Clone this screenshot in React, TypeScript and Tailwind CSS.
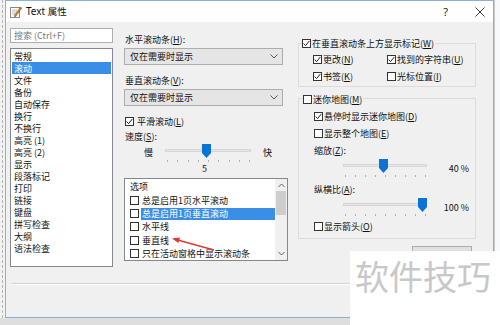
import React from "react";

const Cb = ({ checked = false }: { checked?: boolean }) => (
  <span className="w-[9px] h-[9px] border border-[#333333] bg-white flex items-center justify-center shrink-0">
    {checked && (
      <svg width="7" height="7" viewBox="0 0 7 7">
        <path d="M0.6 3.6 L2.6 5.6 L6.4 0.9" stroke="#222" strokeWidth="1" fill="none" />
      </svg>
    )}
  </span>
);

const U = ({ c }: { c: string }) => <span className="underline underline-offset-[1px]">{c}</span>;

const Slider = ({ width, thumb, ticks }: { width: number; thumb: number; ticks: number[] }) => (
  <div className="relative h-[17px]" style={{ width }}>
    <div className="absolute left-0 right-0 top-[5px] h-[3px] bg-[#e7e7e7] border border-[#d6d6d6]" />
    {ticks.map((t, i) => (
      <div key={i} className="absolute top-[16px] w-[1px] h-[2px] bg-[#b0b0b0]" style={{ left: t }} />
    ))}
    <svg className="absolute top-0" style={{ left: thumb - 4 }} width="9" height="14" viewBox="0 0 9 14">
      <path d="M0 0 H9 V9 L4.5 14 L0 9 Z" fill="#0a74d6" />
    </svg>
  </div>
);

const ticksFor = (w: number, n: number) => Array.from({ length: n }, (_, i) => Math.round(2 + (i * (w - 4)) / (n - 1)));

const Combo = ({ text }: { text: string }) => (
  <div className="h-[17px] w-[159px] bg-[#e5e5e5] border border-[#adadad] flex items-center pl-[5px] pr-[4px] justify-between">
    <span>{text}</span>
    <svg width="8" height="5" viewBox="0 0 8 5">
      <path d="M0.5 0.5 L4 4 L7.5 0.5" stroke="#555" strokeWidth="1" fill="none" />
    </svg>
  </div>
);

const navItems = [
  "常规", "滚动", "文件", "备份", "自动保存", "换行", "不换行", "高亮 (1)", "高亮 (2)", "显示",
  "段落标记", "打印", "链接", "键盘", "拼写检查", "大纲", "语法检查",
];

export default function App() {
  return (
    <div className="w-[500px] h-[325px] bg-[#dedede] overflow-hidden relative flex font-['Noto_Sans_CJK_SC',sans-serif] text-[9px] text-[#111] leading-none">
      {/* left background strip */}
      <div className="w-[5px] h-[318px] bg-[#f2f2f2] flex justify-center">
        <div className="w-0 h-full border-l border-dashed border-[#b5b5b5]" />
      </div>
      {/* dialog */}
      <div className="w-[489px] h-[318px] border border-[#8cb0d6] bg-[#f0f0f0] flex flex-col shrink-0">
        {/* title bar */}
        <div className="h-[21px] bg-white flex items-center pl-[4px] pr-[8px] shrink-0">
          <svg width="12" height="12" viewBox="0 0 12 12">
            <rect x="0.5" y="1.5" width="9" height="10" fill="#fff" stroke="#888" />
            <line x1="2" y1="4" x2="7" y2="4" stroke="#bbb" />
            <line x1="2" y1="6" x2="7" y2="6" stroke="#bbb" />
            <line x1="2" y1="8" x2="6" y2="8" stroke="#bbb" />
            <path d="M4 10 L10.5 1 L11.8 2 L5.3 11 Z" fill="#c98a2b" stroke="#7a4a10" strokeWidth="0.5" />
          </svg>
          <span className="ml-[4px] text-[10px] font-['Noto_Sans',sans-serif] text-[#111]">
            Text <span className="font-['Noto_Sans_CJK_SC',sans-serif] text-[9.5px]">属性</span>
          </span>
          <span className="ml-auto text-[11px] font-['Noto_Sans',sans-serif] text-[#222]">?</span>
          <svg className="ml-[27px]" width="10" height="10" viewBox="0 0 10 10">
            <path d="M0.5 0.5 L9.5 9.5 M9.5 0.5 L0.5 9.5" stroke="#222" strokeWidth="0.9" />
          </svg>
        </div>
        {/* body */}
        <div className="h-[261px] flex pl-[4px] shrink-0">
          {/* left column */}
          <div className="w-[103px] flex flex-col pt-[6px]">
            <div className="h-[15px] border border-[#aeaeae] bg-white flex items-center pl-[3px] text-[#7a7a7a]">
              搜索 <span className="ml-[2px]">(Ctrl+F)</span>
            </div>
            <div className="mt-[5px] h-[219px] border border-[#828790] bg-white pt-[1px] px-[1px]">
              {navItems.map((n, i) => (
                <div key={n} className={`h-[12px] flex items-center pl-[2px] ${i === 1 ? "bg-[#3b8ee6] text-white" : ""}`}>
                  {n}
                </div>
              ))}
            </div>
          </div>
          {/* middle column */}
          <div className="w-[165px] ml-[11px] flex flex-col pt-[11px]">
            <div className="h-[12px] flex items-center pl-[1px]">
              水平滚动条(<U c="H" />):
            </div>
            <div className="mt-[3px]"><Combo text="仅在需要时显示" /></div>
            <div className="mt-[9px] h-[12px] flex items-center pl-[1px]">
              垂直滚动条(<U c="V" />):
            </div>
            <div className="mt-[3px]"><Combo text="仅在需要时显示" /></div>
            <div className="mt-[9px] h-[12px] flex items-center pl-[1px] gap-[3px]">
              <Cb checked />
              <span>平滑滚动(<U c="L" />)</span>
            </div>
            <div className="mt-[3px] h-[12px] flex items-center pl-[1px]">
              速度(<U c="S" />):
            </div>
            <div className="mt-[2px] h-[17px] flex items-start">
              <span className="w-[41px] pl-[20px] pt-[4px]">慢</span>
              <Slider width={86} thumb={41} ticks={ticksFor(86, 9)} />
              <span className="ml-[12px] pt-[4px]">快</span>
            </div>
            <div className="h-[12px] mt-[1px] flex items-center pl-[78px]">5</div>
            <div className="mt-[4px] w-[164px] h-[83px] border border-[#828790] bg-white flex">
              <div className="flex-1 flex flex-col pt-[1px]">
                <div className="h-[14px] flex items-center pl-[5px]">选项</div>
                {["总是启用1页水平滚动", "总是启用1页垂直滚动", "水平线", "垂直线", "只在活动窗格中显示滚动条"].map((t, i) => (
                  <div key={t} className="h-[13.3px] flex items-center pl-[5px]">
                    <Cb />
                    <span className={`ml-[2px] h-[12px] flex items-center pl-[1px] ${i === 1 ? "bg-[#3b8ee6] text-white flex-1" : ""}`}>{t}</span>
                  </div>
                ))}
              </div>
              <div className="w-[12px] bg-[#f0f0f0] flex flex-col items-center">
                <svg className="mt-[4px]" width="7" height="5" viewBox="0 0 7 5">
                  <path d="M0.5 4 L3.5 1 L6.5 4" stroke="#606060" strokeWidth="1" fill="none" />
                </svg>
                <div className="mt-[3px] w-[10px] h-[24px] bg-[#cdcdcd]" />
                <svg className="mt-auto mb-[4px]" width="7" height="5" viewBox="0 0 7 5">
                  <path d="M0.5 1 L3.5 4 L6.5 1" stroke="#606060" strokeWidth="1" fill="none" />
                </svg>
              </div>
            </div>
          </div>
          {/* right column */}
          <div className="w-[178px] ml-[9px] flex flex-col pt-[21px]">
            <div className="h-[44px] border border-[#dcdcdc] flex flex-col">
              <div className="-mt-[7px] ml-[3px] h-[12px] flex items-center gap-[1px] bg-[#f0f0f0] self-start pr-[1px]">
                <Cb checked />
                <span>在垂直滚动条上方显示标记(<U c="W" />)</span>
              </div>
              <div className="mt-[4px] pl-[14px] grid grid-cols-[74px_1fr] gap-y-[5px]">
                <div className="h-[12px] flex items-center gap-[1px]"><Cb checked /><span>更改(<U c="N" />)</span></div>
                <div className="h-[12px] flex items-center gap-[1px]"><Cb checked /><span>找到的字符串(<U c="U" />)</span></div>
                <div className="h-[12px] flex items-center gap-[1px]"><Cb checked /><span>书签(<U c="K" />)</span></div>
                <div className="h-[12px] flex items-center gap-[1px]"><Cb /><span>光标位置(<U c="I" />)</span></div>
              </div>
            </div>
            <div className="mt-[11px] h-[141px] border border-[#dcdcdc] flex flex-col">
              <div className="-mt-[6px] ml-[4px] h-[12px] flex items-center gap-[1px] bg-[#f0f0f0] self-start pr-[1px]">
                <Cb />
                <span>迷你地图(<U c="M" />)</span>
              </div>
              <div className="pl-[15px] flex flex-col">
                <div className="mt-[5px] h-[12px] flex items-center gap-[1px]"><Cb checked /><span>悬停时显示迷你地图(<U c="D" />)</span></div>
                <div className="mt-[5px] h-[12px] flex items-center gap-[1px]"><Cb /><span>显示整个地图(<U c="E" />)</span></div>
                <div className="mt-[5px] h-[12px] flex items-center">缩放(<U c="Z" />):</div>
                <div className="mt-[3px] flex items-start">
                  <div className="ml-[29px]"><Slider width={84} thumb={40} ticks={ticksFor(84, 9)} /></div>
                  <span className="ml-[12px] mt-[3px] h-[12px] flex items-center w-[30px] justify-end whitespace-nowrap">40 %</span>
                </div>
                <div className="mt-[7px] h-[12px] flex items-center">纵横比(<U c="A" />):</div>
                <div className="mt-[3px] flex items-start">
                  <div className="ml-[29px]"><Slider width={84} thumb={79} ticks={ticksFor(84, 9)} /></div>
                  <span className="ml-[12px] mt-[3px] h-[12px] flex items-center w-[30px] justify-end whitespace-nowrap">100 %</span>
                </div>
                <div className="mt-[5px] h-[12px] flex items-center gap-[1px]"><Cb /><span>显示箭头(<U c="O" />)</span></div>
              </div>
            </div>
            <div className="mt-[7px] self-end mr-[4px] w-[60px] h-[21px] border border-[#adadad] bg-[#e1e1e1]" />
          </div>
        </div>
        {/* separator */}
        <div className="mx-[5px] h-[2px] border-t border-[#d5d5d5] border-b border-b-white shrink-0" />
      </div>
      {/* right background strip */}
      <div className="flex-1 h-[318px] bg-[#f7f9fb] border-l border-[#c8c8c8]" />
      {/* red annotation arrow */}
      <svg className="absolute left-[168px] top-[232px]" width="60" height="24" viewBox="0 0 60 24">
        <path d="M6 7 L46 18" stroke="#e03a32" strokeWidth="1.6" fill="none" />
        <path d="M4 6.5 L12 5.5 L10.5 11 Z" fill="#e03a32" />
      </svg>
      {/* watermark */}
      <div className="absolute right-0 bottom-0 w-[150px] h-[74px] bg-white flex items-start pl-[5px] pt-[8px]">
        <span className="text-[34px] leading-none text-[#c8c8c8]">软件技巧</span>
      </div>
    </div>
  );
}
